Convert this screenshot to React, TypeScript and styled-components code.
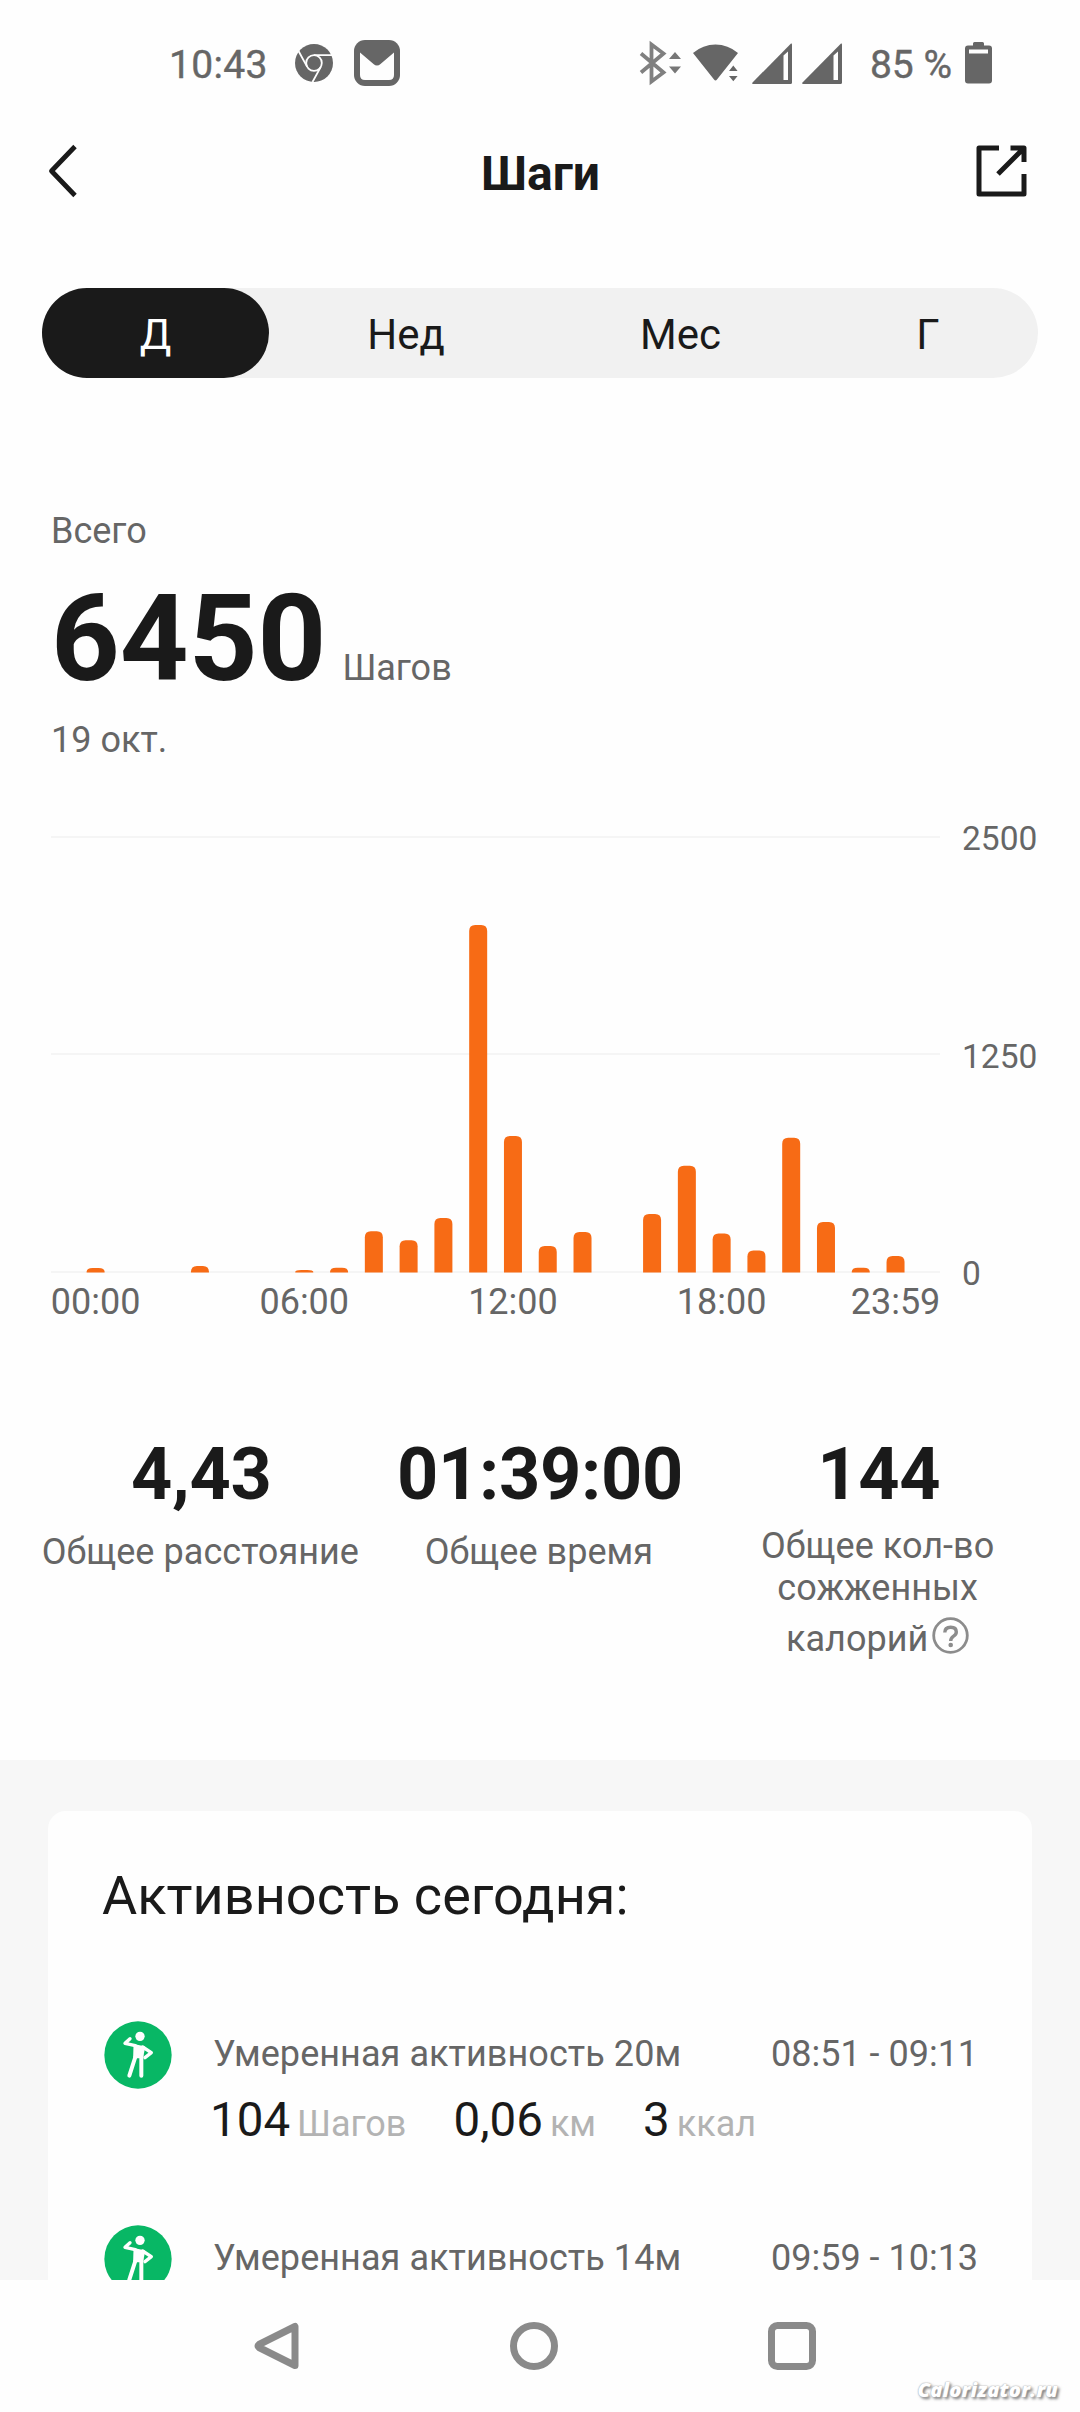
import React from "react";
import styled, { createGlobalStyle } from "styled-components";

const INK = "#1a1a1a";
const MUTED = "#666666";
const ORANGE = "#f76b15";

const GlobalStyle = createGlobalStyle`
  * { box-sizing: border-box; }
  body { margin: 0; background: #fff; font-family: Roboto, "Noto Sans", sans-serif; color: ${INK}; }
  svg { display: block; flex: none; overflow: visible; }
`;

const Screen = styled.div`
  position: relative;
  width: 1080px;
  height: 2412px;
  overflow: hidden;
  display: flex;
  flex-direction: column;
  background: #fefefe;
`;

const StatusBar = styled.div`
  height: 126px;
  padding: 0 88px 0 169px;
  display: flex;
  align-items: center;
  justify-content: space-between;
  color: ${MUTED};
`;

const StatusGroup = styled.div`
  display: flex;
  align-items: center;
`;

const StatusText = styled.span<{ $after: number }>`
  font-size: 39px;
  line-height: 46px;
  padding-top: 3px;
  margin-right: ${(p) => p.$after}px;
  white-space: nowrap;
  -webkit-text-stroke: 0.4px ${MUTED};
`;

const Clock = styled(StatusText)`
  width: 97px;
  letter-spacing: 0.3px;
`;

const IconSlot = styled.span<{ $after?: number }>`
  margin-right: ${(p) => p.$after ?? 0}px;
`;

const Header = styled.header`
  height: 90px;
  padding: 0 52px 0 48px;
  display: grid;
  grid-template-columns: 52px 1fr 52px;
  align-items: center;
`;

const Title = styled.h1`
  margin: 0;
  padding: 5px 0 0 5px;
  font-size: 48px;
  line-height: 58px;
  font-weight: 700;
  text-align: center;
`;

const Tabs = styled.nav`
  margin: 72px 42px 0;
  height: 90px;
  flex: none;
  border-radius: 45px;
  background: #f1f1f1;
  display: grid;
  grid-template-columns: 227px 274px 275px 220px;
`;

const Tab = styled.button<{ $active?: boolean }>`
  border: 0;
  padding: 3px 0 0;
  border-radius: 45px;
  font: 400 42px/50px Roboto, "Noto Sans", sans-serif;
  color: ${(p) => (p.$active ? "#fff" : INK)};
  background: ${(p) => (p.$active ? INK : "transparent")};
`;

const Summary = styled.section`
  margin-top: 132px;
  padding-left: 51px;
`;

const Caption = styled.div`
  font-size: 36px;
  line-height: 42px;
  color: ${MUTED};
`;

const TotalRow = styled.div`
  margin: 17px 0 10px;
  height: 140px;
  display: flex;
  align-items: baseline;
  gap: 16px;
`;

const Total = styled.span`
  font-size: 120px;
  line-height: 140px;
  font-weight: 700;
`;

const ChartArea = styled.section`
  margin-top: 20px;
  height: 550px;
  flex: none;
`;

const Stats = styled.section`
  height: 429px;
  flex: none;
  padding: 102px 33px 0 31px;
  display: grid;
  grid-template-columns: repeat(3, 1fr);
`;

const Stat = styled.div`
  display: flex;
  flex-direction: column;
  align-items: center;
`;

const StatValue = styled.div`
  padding-left: 2px;
  font-size: 72px;
  line-height: 84px;
  font-weight: 700;
  letter-spacing: -0.3px;
`;

const StatLabel = styled.div<{ $top: number }>`
  padding-top: ${(p) => p.$top}px;
  font-size: 36px;
  line-height: 42.2px;
  letter-spacing: 0.05px;
  color: ${MUTED};
  text-align: center;
  white-space: nowrap;
`;

const HelpLine = styled.div`
  margin-top: 4px;
  display: flex;
  align-items: center;
  justify-content: center;
  gap: 4px;
  height: 44px;
`;

const HelpText = styled.span`
  padding-top: 7px;
`;

const Feed = styled.section`
  height: 520px;
  flex: none;
  padding: 51px 48px 0;
  background: #f7f7f7;
  overflow: hidden;
`;

const Card = styled.div`
  height: 700px;
  padding: 53px 54px 0;
  border-radius: 18px;
  background: #fefefe;
`;

const CardTitle = styled.h2`
  margin: 0 0 93px;
  font-size: 54px;
  line-height: 64px;
  font-weight: 400;
  letter-spacing: 0.05px;
`;

const Activity = styled.div`
  height: 204px;
  display: grid;
  grid-template-columns: 68px 1fr;
  column-gap: 41px;
  padding-left: 2px;
  align-items: start;
`;

const ActivityBody = styled.div`
  padding-top: 12px;
`;

const ActivityHead = styled.div`
  display: flex;
  font-size: 36px;
  line-height: 42px;
  color: ${MUTED};
  white-space: nowrap;
`;

const ActivityName = styled.span`
  width: 558px;
  flex: none;
  letter-spacing: 0.07px;
`;

const Metrics = styled.div`
  margin: 17px 0 0 -3px;
  display: flex;
  gap: 47px;
  line-height: 56px;
`;

const Metric = styled.span`
  display: flex;
  align-items: baseline;
  gap: 7px;
  font-size: 47.5px;
`;

const Unit = styled.span`
  font-size: 36px;
  color: #b3b3b3;
`;

const NavBar = styled.footer`
  height: 132px;
  flex: none;
  padding: 0 264px 0 254px;
  display: flex;
  align-items: center;
  justify-content: space-between;
`;

const Watermark = styled.div`
  position: absolute;
  right: 22px;
  bottom: 10px;
  font: italic 800 20px/24px "Open Sans", "Liberation Sans", sans-serif;
  letter-spacing: 0.2px;
  color: #fff;
  text-shadow: 0 0 1px #aaa, 0 0 2px #bbb, 2px 2px 3px #777;
`;

const ChromeIcon = () => (
  <svg width="38" height="38" viewBox="0 0 38 38">
    <circle cx="19" cy="19" r="19" fill={MUTED} />
    <g fill="none" stroke="#fefefe" strokeWidth="1.8">
      <circle cx="19" cy="19" r="7.8" />
      <path d="M19 11.2H37M12.2 22.9L3.5 7M25.8 22.9L17.5 38" />
    </g>
  </svg>
);

const MailIcon = () => (
  <svg width="46" height="46" viewBox="0 0 46 46">
    <rect width="46" height="46" rx="11" fill={MUTED} />
    <path d="M6 12.5L19.5 24Q23 27 26.5 24L40 12.5V35Q40 40 35 40H11Q6 40 6 35Z" fill="#fefefe" />
  </svg>
);

const BluetoothIcon = () => (
  <svg width="42" height="42" viewBox="0 0 42 42">
    <path d="M1 11.5L23.5 30.5L11.5 39.5V2.5L23.5 11.5L1 30.5" fill="none" stroke="#808080" strokeWidth="3.8" />
    <path d="M29 17L35 10L41 17ZM29 24.5L35 31.5L41 24.5Z" fill="#777" />
  </svg>
);

const WifiIcon = () => (
  <svg width="45" height="38" viewBox="0 0 45 38">
    <path d="M0 9Q10 .5 22.5 .5T45 9L24 35.5Q22.5 37.5 21 35.5Z" fill={MUTED} />
    <path d="M40.5 18L31 29V38H45V18Z" fill="#fefefe" />
    <path d="M36 27L40.3 21.5L44.6 27ZM36 32L40.3 37.2L44.6 32Z" fill={MUTED} />
  </svg>
);

const SignalIcon = () => (
  <svg width="40" height="41" viewBox="0 0 40 41">
    <path d="M39 .5Q40 0 40 1.5V39.5Q40 41 38.5 41H.5Q0 40.5 .5 39.5Z" fill={MUTED} />
    <path d="M31.5 12.5L36 8.5V37H31.5Z" fill="#fefefe" />
  </svg>
);

const BatteryIcon = () => (
  <svg width="27" height="42" viewBox="0 0 27 42">
    <path d="M8 3.5V1.5Q8 0 9.5 0H17.5Q19 0 19 1.5V3.5H24Q27 3.5 27 6.5V38.5Q27 41.5 24 41.5H3Q0 41.5 0 38.5V6.5Q0 3.5 3 3.5Z" fill={MUTED} />
    <rect x="4" y="7.5" width="19" height="4" fill="#fefefe" />
  </svg>
);

const BackIcon = () => (
  <svg width="52" height="52" viewBox="0 0 52 52">
    <path d="M27 1.5L3.5 26L27 50.5" fill="none" stroke={INK} strokeWidth="4.8" strokeLinejoin="round" />
  </svg>
);

const ExportIcon = () => (
  <svg width="51" height="52" viewBox="0 0 51 52">
    <g fill="none" stroke={INK} strokeWidth="5" strokeLinejoin="round">
      <path d="M23 3H3V49H48V29" />
      <path d="M34.5 3H48V17M47.5 3.5L22 29" />
    </g>
  </svg>
);

const HelpIcon = () => (
  <svg width="37" height="37" viewBox="0 0 37 37">
    <circle cx="18.5" cy="18.5" r="16.8" fill="none" stroke="#8c8c8c" strokeWidth="2.8" />
    <path d="M12.8 15.5Q12.8 10.3 18.7 10.3Q24.3 10.3 24.3 15Q24.3 17.5 21.3 19.4Q18.7 21.2 18.7 24" fill="none" stroke="#8c8c8c" strokeWidth="3.4" />
    <circle cx="18.7" cy="28" r="2.3" fill="#8c8c8c" />
  </svg>
);

const PersonIcon = () => (
  <svg width="68" height="68" viewBox="0 0 204 204">
    <circle cx="102" cy="102" r="101" fill="#08b765" />
    <g fill="none" stroke="#fefefe" strokeLinecap="round" strokeLinejoin="round">
      <circle cx="108" cy="46" r="14" fill="#fefefe" stroke="none" />
      <path d="M78 53L63 67L94 74" strokeWidth="10" />
      <path d="M116 78L142 95L123 110" strokeWidth="10" />
      <path d="M92 73L120 79L114 108H91Z" fill="#fefefe" strokeWidth="7" />
      <path d="M94 108L76 164M112 100L112 164" strokeWidth="12" />
    </g>
  </svg>
);

// Steps for every hour of the day
const HOURLY = [23, 0, 0, 35, 0, 0, 12, 25, 234, 182, 311, 1994, 782, 150, 230, 0, 334, 610, 221, 124, 771, 288, 25, 92];
const MAX = 2500;
const PLOT = { left: 51, right: 940, top: 56, bottom: 491 };
const centerOf = (hour: number) => 95.6 + hour * 34.78;
const yOf = (steps: number) => PLOT.bottom - (steps / MAX) * (PLOT.bottom - PLOT.top);
const X_LABELS: [number, string][] = [[0, "00:00"], [6, "06:00"], [12, "12:00"], [18, "18:00"], [23, "23:59"]];

const StepsChart = () => (
  <svg width="1080" height="550" viewBox="0 0 1080 550" fontFamily="Roboto, sans-serif" fill={MUTED}>
    {[2500, 1250, 0].map((v) => (
      <g key={v}>
        <rect x={PLOT.left} y={Math.floor(yOf(v)) - 1} width={PLOT.right - PLOT.left} height="2" fill="#f5f5f5" />
        <text x="962" y={yOf(v) + 13} fontSize="33.5">{v}</text>
      </g>
    ))}
    {HOURLY.map((steps, hour) => {
      if (!steps) return null;
      const x = centerOf(hour) - 9;
      const y = yOf(steps);
      const r = Math.min(6, PLOT.bottom - y);
      return (
        <path
          key={hour}
          fill={ORANGE}
          d={`M${x} ${PLOT.bottom + 0.5}V${y + r}Q${x} ${y} ${x + 6} ${y}H${x + 12}Q${x + 18} ${y} ${x + 18} ${y + r}V${PLOT.bottom + 0.5}Z`}
        />
      );
    })}
    {X_LABELS.map(([hour, label]) => (
      <text key={label} x={centerOf(hour)} y="533" fontSize="36" textAnchor="middle">{label}</text>
    ))}
  </svg>
);

const ACTIVITIES = [
  { name: "Умеренная активность 20м", time: "08:51 - 09:11", metrics: [["104", "Шагов"], ["0,06", "км"], ["3", "ккал"]] },
  { name: "Умеренная активность 14м", time: "09:59 - 10:13", metrics: [] },
];

export default function App() {
  return (
    <Screen>
      <GlobalStyle />
      <StatusBar>
        <StatusGroup>
          <Clock $after={29}>10:43</Clock>
          <IconSlot $after={21}><ChromeIcon /></IconSlot>
          <MailIcon />
        </StatusGroup>
        <StatusGroup>
          <IconSlot $after={11}><BluetoothIcon /></IconSlot>
          <IconSlot $after={14}><WifiIcon /></IconSlot>
          <IconSlot $after={10}><SignalIcon /></IconSlot>
          <IconSlot $after={28}><SignalIcon /></IconSlot>
          <StatusText $after={13}>85 %</StatusText>
          <BatteryIcon />
        </StatusGroup>
      </StatusBar>
      <Header>
        <BackIcon />
        <Title>Шаги</Title>
        <ExportIcon />
      </Header>
      <Tabs>
        <Tab $active>Д</Tab>
        <Tab>Нед</Tab>
        <Tab>Мес</Tab>
        <Tab>Г</Tab>
      </Tabs>
      <Summary>
        <Caption>Всего</Caption>
        <TotalRow>
          <Total>6450</Total>
          <Caption>Шагов</Caption>
        </TotalRow>
        <Caption>19 окт.</Caption>
      </Summary>
      <ChartArea>
        <StepsChart />
      </ChartArea>
      <Stats>
        <Stat>
          <StatValue>4,43</StatValue>
          <StatLabel $top={14}>Общее расстояние</StatLabel>
        </Stat>
        <Stat>
          <StatValue>01:39:00</StatValue>
          <StatLabel $top={14}>Общее время</StatLabel>
        </Stat>
        <Stat>
          <StatValue>144</StatValue>
          <StatLabel $top={8}>
            Общее кол-во
            <br />
            сожженных
            <HelpLine>
              <HelpText>калорий</HelpText>
              <HelpIcon />
            </HelpLine>
          </StatLabel>
        </Stat>
      </Stats>
      <Feed>
        <Card>
          <CardTitle>Активность сегодня:</CardTitle>
          {ACTIVITIES.map((a) => (
            <Activity key={a.time}>
              <PersonIcon />
              <ActivityBody>
                <ActivityHead>
                  <ActivityName>{a.name}</ActivityName>
                  <span>{a.time}</span>
                </ActivityHead>
                <Metrics>
                  {a.metrics.map(([value, unit]) => (
                    <Metric key={unit}>
                      {value}
                      <Unit>{unit}</Unit>
                    </Metric>
                  ))}
                </Metrics>
              </ActivityBody>
            </Activity>
          ))}
        </Card>
      </Feed>
      <NavBar>
        <svg width="45" height="48" viewBox="0 0 45 48">
          <path d="M41 4.5V43.5L5 25.5Q3 24 5 22.5Z" fill="none" stroke="#8a8a8a" strokeWidth="7" strokeLinejoin="round" />
        </svg>
        <svg width="48" height="48" viewBox="0 0 48 48">
          <circle cx="24" cy="24" r="20.5" fill="none" stroke="#8a8a8a" strokeWidth="7" />
        </svg>
        <svg width="48" height="48" viewBox="0 0 48 48">
          <rect x="3.5" y="3.5" width="41" height="41" rx="6" fill="none" stroke="#8a8a8a" strokeWidth="7" />
        </svg>
      </NavBar>
      <Watermark>Calorizator.ru</Watermark>
    </Screen>
  );
}
